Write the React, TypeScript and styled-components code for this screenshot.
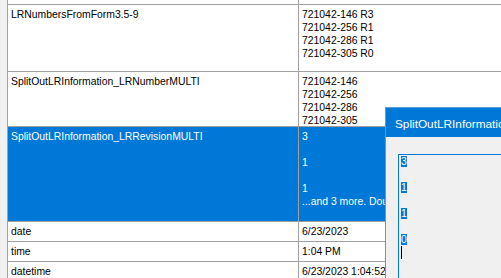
import React from "react";
import styled, { createGlobalStyle } from "styled-components";

interface IRow {
  label: string;
  lines: string[];
  height: number;
  selected?: boolean;
}

const rows: IRow[] = [
  { label: "", lines: [], height: 4 },
  {
    label: "LRNumbersFromForm3.5-9",
    lines: ["721042-146 R3", "721042-256 R1", "721042-286 R1", "721042-305 R0"],
    height: 66,
  },
  {
    label: "SplitOutLRInformation_LRNumberMULTI",
    lines: ["721042-146", "721042-256", "721042-286", "721042-305"],
    height: 54,
  },
  {
    label: "SplitOutLRInformation_LRRevisionMULTI",
    lines: ["3", "", "1", "", "1", "...and 3 more. Double-click to view all."],
    height: 94,
    selected: true,
  },
  { label: "date", lines: ["6/23/2023"], height: 19 },
  { label: "time", lines: ["1:04 PM"], height: 19 },
  { label: "datetime", lines: ["6/23/2023 1:04:52 PM"], height: 19 },
];

const boxLines = ["3", "", "1", "", "1", "", "0"];

function App() {
  return (
    <>
      <GlobalStyle />
      <Page>
        <Strip />
        <Grid>
          {rows.map((row, i) => (
            <Row key={i} $height={row.height} $selected={row.selected}>
              <LabelCell>{row.label}</LabelCell>
              <ValueCell>
                {row.lines.map((line, j) => (
                  <Line key={j}>{line || "\u00a0"}</Line>
                ))}
              </ValueCell>
            </Row>
          ))}
        </Grid>
        <Dialog>
          <TitleBar>SplitOutLRInformation</TitleBar>
          <Body>
            <TextBox>
              {boxLines.map((line, i) => (
                <Line key={i}>{line ? <Marked>{line}</Marked> : "\u00a0"}</Line>
              ))}
              <Line>
                <Caret />
              </Line>
            </TextBox>
          </Body>
        </Dialog>
      </Page>
    </>
  );
}

export default App;

const GlobalStyle = createGlobalStyle`
  html, body {
    margin: 0;
    width: 501px;
    height: 278px;
    overflow: hidden;
    background: #ffffff;
  }
  body {
    font-family: "Liberation Sans", Arial, sans-serif;
    font-size: 10.4px;
    line-height: 13px;
    color: #000000;
  }
`;

const Page = styled.div`
  position: relative;
  display: flex;
  width: 501px;
  height: 278px;
  overflow: hidden;
`;

const Strip = styled.div`
  width: 7px;
  flex: none;
  background: #f0f0f0;
`;

const Grid = styled.div`
  flex: 1;
  border-left: 1px solid #a0a0a0;
  background: #ffffff;
`;

const Row = styled.div<{ $height: number; $selected?: boolean }>`
  display: grid;
  grid-template-columns: 291px 1fr;
  height: ${(p) => p.$height}px;
  border-bottom: 1px solid #a0a0a0;
  background: ${(p) => (p.$selected ? "#0078d7" : "#ffffff")};
  color: ${(p) => (p.$selected ? "#ffffff" : "#000000")};
`;

const LabelCell = styled.div`
  border-right: 1px solid #a0a0a0;
  padding: 3px 0 0 3px;
  white-space: pre;
  overflow: hidden;
`;

const ValueCell = styled.div`
  padding: 3px 0 0 3px;
  white-space: pre;
  overflow: hidden;
`;

const Line = styled.div`
  height: 13px;
  white-space: pre;
`;

const Dialog = styled.div`
  position: absolute;
  left: 385px;
  top: 107px;
  width: 220px;
  height: 220px;
  display: flex;
  flex-direction: column;
  background: #f0f0f0;
  border-left: 1px solid #5a9bd8;
  border-top: 1px solid #5a9bd8;
`;

const TitleBar = styled.div`
  height: 29px;
  flex: none;
  display: flex;
  align-items: center;
  padding: 3px 0 0 9px;
  box-sizing: border-box;
  background: #0078d7;
  color: #ffffff;
  font-size: 11.8px;
  white-space: pre;
  overflow: hidden;
`;

const Body = styled.div`
  flex: 1;
  padding: 17px 0 0 12px;
`;

const TextBox = styled.div`
  height: 200px;
  border: 1px solid #0078d7;
  border-right: none;
  border-bottom: none;
  padding-left: 2px;
  background: #f0f0f0;
`;

const Marked = styled.span`
  background: #0078d7;
  color: #ffffff;
`;

const Caret = styled.span`
  display: inline-block;
  width: 1px;
  height: 13px;
  background: #000000;
  vertical-align: top;
`;
